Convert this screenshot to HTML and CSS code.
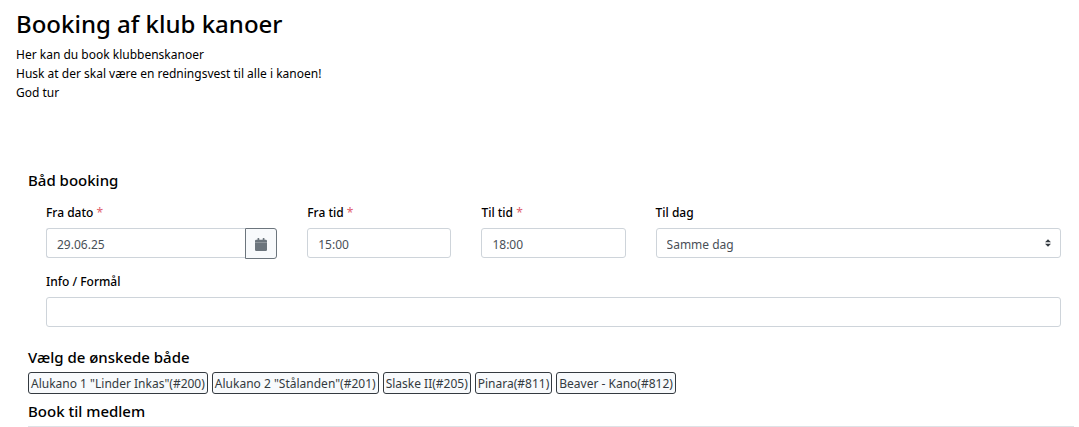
FILE: index.html
```html
<!DOCTYPE html>
<html lang="da">
<head>
    <meta charset="UTF-8">
    <meta name="viewport" content="width=device-width, initial-scale=1.0">
    <title>Booking af klub kanoer</title>
    <link rel="stylesheet" href="styles.css">
</head>
<body>
    <header class="intro">
        <h1>Booking af klub kanoer</h1>
        <p>Her kan du book klubbenskanoer<br>Husk at der skal være en redningsvest til alle i kanoen!<br>God tur</p>
    </header>
    <form class="booking">
        <h2>Båd booking</h2>
        <div class="form-grid">
            <div class="field col-3">
                <label for="fromDate">Fra dato <span class="required">*</span></label>
                <div class="input-group">
                    <input type="text" id="fromDate" class="form-control" value="29.06.25" required>
                    <button type="button" class="date-button" aria-label="Vælg dato">
                        <svg width="12" height="13" viewBox="0 0 12 13" fill="currentColor" aria-hidden="true">
                            <path d="M0 4V3a1.2 1.2 0 0 1 1.2-1.2h1.3V.4Q2.500 0 2.900 0h1Q4.300 0 4.300.4v1.400h3.400V.4Q7.700 0 8.100 0h1Q9.500 0 9.500.4v1.400h1.300A1.200 1.200 0 0 1 12 3v1z"/>
                            <path d="M0 4.300h12v7.500a1.200 1.200 0 0 1-1.200 1.200H1.200A1.200 1.200 0 0 1 0 11.800z"/>
                        </svg>
                    </button>
                </div>
            </div>
            <div class="field col-2">
                <label for="fromTime">Fra tid <span class="required">*</span></label>
                <input type="text" id="fromTime" class="form-control" value="15:00" required>
            </div>
            <div class="field col-2">
                <label for="toTime">Til tid <span class="required">*</span></label>
                <input type="text" id="toTime" class="form-control" value="18:00" required>
            </div>
            <div class="field col-5">
                <label for="toDay">Til dag</label>
                <div class="select-wrap">
                    <select id="toDay" class="form-control">
                        <option>Samme dag</option>
                    </select>
                    <svg class="select-arrows" width="6" height="8" viewBox="0 0 4 5" aria-hidden="true">
                        <path fill="#343a40" d="M2 0L0 2h4zm0 5L0 3h4z"/>
                    </svg>
                </div>
            </div>
            <div class="field col-12">
                <label for="info">Info / Formål</label>
                <input type="text" id="info" class="form-control">
            </div>
        </div>
        <h2>Vælg de ønskede både</h2>
        <div class="boats">
            <button type="button" class="boat">Alukano 1 "Linder Inkas"(#200)</button>
            <button type="button" class="boat">Alukano 2 "Stålanden"(#201)</button>
            <button type="button" class="boat">Slaske II(#205)</button>
            <button type="button" class="boat">Pinara(#811)</button>
            <button type="button" class="boat">Beaver - Kano(#812)</button>
        </div>
        <h2 class="member-title">Book til medlem</h2>
    </form>
</body>
</html>
```

FILE: styles.css
```css
* { box-sizing: border-box; }
body {
    font-family: "Segoe UI", "Noto Sans", "Open Sans", sans-serif;
    font-size: 12px;
    line-height: 19px;
    margin: 0;
    background: #fff;
    color: #000;
}
h1, h2, p { margin: 0; }
h1 { font-size: 24px; font-weight: 500; line-height: 30px; margin-bottom: 6px; }
h2 { font-size: 15px; font-weight: 500; line-height: 18px; }
.intro { padding: 9px 16px 0; }
.booking { padding: 69px 5px 0 28px; }
.form-grid {
    display: grid;
    grid-template-columns: repeat(12, 1fr);
    column-gap: 30px;
    row-gap: 15px;
    padding: 15px 13px 21px 18px;
}
.col-2 { grid-column: span 2; }
.col-3 { grid-column: span 3; }
.col-5 { grid-column: span 5; }
.col-12 { grid-column: span 12; }
.field { min-width: 0; }
.field label { display: block; font-weight: 500; line-height: 18px; margin-bottom: 6px; }
.required { color: #e0606c; font-weight: 400; }
.form-control {
    display: block;
    width: 100%;
    height: 30px;
    padding: 2px 10px 0;
    border: 1px solid #ced4da;
    border-radius: 3px;
    background: #fff;
    color: #495057;
    font: inherit;
}
.input-group { display: flex; height: 30px; }
.input-group .form-control { flex: 1; min-width: 0; border-right: 0; border-radius: 3px 0 0 3px; }
.date-button {
    display: flex;
    align-items: center;
    justify-content: center;
    width: 32px;
    height: 31px;
    padding: 2px 0 0;
    border: 1px solid #6c757d;
    border-radius: 0 3px 3px 0;
    background: #f8fafc;
    color: #6c757d;
}
.select-wrap { position: relative; }
.select-wrap select { appearance: none; }
.select-arrows { position: absolute; right: 10px; top: 11px; pointer-events: none; }
.boats { display: flex; flex-wrap: wrap; gap: 4px; margin: 6px 0 8px; }
.boat {
    height: 22px;
    padding: 0 2px;
    border: 1px solid #343a40;
    border-radius: 3px;
    background: #f8fafc;
    color: #343a40;
    font: inherit;
}
.member-title { padding-bottom: 6px; border-bottom: 1px solid #dee2e6; box-sizing: content-box; }
```
